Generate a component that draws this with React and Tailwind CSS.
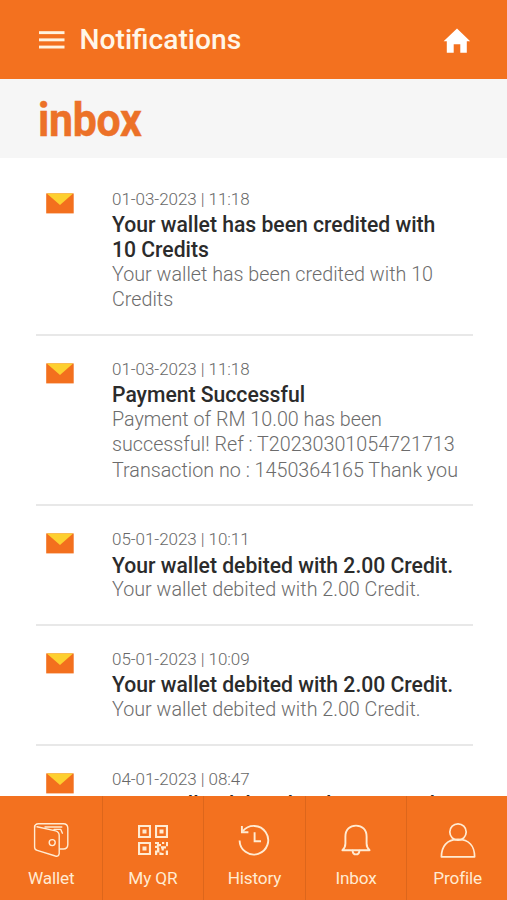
import React from "react";

/* ===== data ===== */
const MESSAGES = [
  {
    date: "01-03-2023 | 11:18",
    title: ["Your wallet has been credited with", "10 Credits"],
    body: ["Your wallet has been credited with 10", "Credits"],
  },
  {
    date: "01-03-2023 | 11:18",
    title: ["Payment Successful"],
    body: [
      "Payment of RM 10.00 has been",
      "successful! Ref : T20230301054721713",
      "Transaction no : 1450364165 Thank you",
    ],
  },
  {
    date: "05-01-2023 | 10:11",
    title: ["Your wallet debited with 2.00 Credit."],
    body: ["Your wallet debited with 2.00 Credit."],
  },
  {
    date: "05-01-2023 | 10:09",
    title: ["Your wallet debited with 2.00 Credit."],
    body: ["Your wallet debited with 2.00 Credit."],
  },
  {
    date: "04-01-2023 | 08:47",
    title: ["Your wallet debited with 2.00 Credit."],
    body: [],
  },
];

/* ===== icons ===== */
function MenuIcon() {
  return (
    <svg width="26" height="18" viewBox="0 0 26 18" fill="#fff3df" aria-hidden>
      <rect y="0.2" width="25.5" height="2.9" />
      <rect y="7.4" width="25.5" height="2.9" />
      <rect y="14.6" width="25.5" height="2.9" />
    </svg>
  );
}

function HomeIcon() {
  return (
    <svg width="28" height="25" viewBox="0 0 28 25" fill="#fff" aria-hidden>
      <path d="M14 0.5 27.2 13.2H23.8V24.8H17.3V16.2H10.7V24.8H3.8V13.2H0.6Z" />
    </svg>
  );
}

function MailIcon() {
  return (
    <svg width="28" height="21" viewBox="0 0 28 21" aria-hidden>
      <rect width="27.5" height="20" x="0.2" y="0.4" fill="#f3701e" />
      <path d="M0.8 0.4H27.1L14 12Z" fill="#fdd02f" />
    </svg>
  );
}

const LINE = {
  width: 36,
  height: 36,
  viewBox: "0 0 36 36",
  fill: "none",
  stroke: "#ffebd2",
  strokeWidth: 1.6,
  strokeLinejoin: "round",
  strokeLinecap: "round",
};

function WalletIcon() {
  return (
    <svg {...LINE} strokeWidth={1.4}>
      <path d="M1.6 4V25.2Q1.6 27.6 4.2 28.4L22.4 34Q25.6 34.9 26.2 31.6V13.6Q26.2 9.9 22.6 8.9L4 4.8" />
      <path d="M1.6 5.2Q1.8 2 5.4 1.8H30.4Q34.6 1.8 34.8 6V22.6Q34.6 27 30.4 27H26.8" />
      <path d="M12 5H28.8M21 7.4H27.8L29.4 11.2" />
      <circle cx="19.2" cy="20.6" r="3" />
    </svg>
  );
}

function QrIcon() {
  return (
    <svg {...LINE} stroke="none" fill="#ffebd2">
      <path
        fillRule="evenodd"
        d="M3 3H16V16H3ZM5.1 5.1V13.9H13.9V5.1ZM20 3H33V16H20ZM22.1 5.1V13.9H30.9V5.1ZM3 20H16V33H3ZM5.1 22.1V30.9H13.9V22.1Z"
      />
      <path d="M7.5 7.5H11.5V11.5H7.5ZM24.5 7.5H28.5V11.5H24.5ZM7.5 24.5H11.5V28.5H7.5Z" />
      <path d="M20 20H24V22H26V24.2H23.8V26H20V23.8H22V22H20ZM27 20H29.2V22H27ZM31 20H33V24.2H31V26.4H28.8V24.2H31ZM26 24.2H28.8V28.6H26.6V26.4H26ZM20 28.4H22V26H24.4V30.6H22.2V33H20ZM26.6 28.6V31H28.6V33H24.4V30.6H26.6ZM30.8 28.6H33V33H30.8Z" />
    </svg>
  );
}

function HistoryIcon() {
  return (
    <svg {...LINE} strokeLinecap="butt" strokeLinejoin="miter" strokeWidth={1.9}>
      <path d="M3.6 18.4A14.3 14.3 0 1 0 6.8 9.2" />
      <path d="M5.9 3.9V10.2H12.4" />
      <path d="M18.6 10.2V19.2H25" />
    </svg>
  );
}

function BellIcon() {
  return (
    <svg {...LINE} strokeWidth={1.9}>
      <path d="M4.4 28.2Q7.4 25.5 7.4 21.5V14.5C7.4 7.5 12 3.6 18 3.6S28.6 7.5 28.6 14.5V21.5Q28.6 25.5 31.6 28.2Z" />
      <path d="M14.6 28.6Q14.8 32.4 18 32.4T21.4 28.6" />
    </svg>
  );
}

function ProfileIcon() {
  return (
    <svg {...LINE} strokeWidth={1.7}>
      <circle cx="18" cy="10" r="8.2" />
      <path d="M1.4 34.8C1.4 24.8 6.5 17.4 18 17.4S34.6 24.8 34.6 34.8Z" />
    </svg>
  );
}

const TABS = [
  { label: "Wallet", Icon: WalletIcon },
  { label: "My QR", Icon: QrIcon },
  { label: "History", Icon: HistoryIcon },
  { label: "Inbox", Icon: BellIcon },
  { label: "Profile", Icon: ProfileIcon },
];

/* ===== list item ===== */
function Message({ m }) {
  return (
    <li className="flex h-fit border-b-2 border-[#e8e8e8] pt-[20.1px] pb-[21.3px] pl-[10px]">
      <div className="w-[66px] shrink-0 pt-[7px]">
        <MailIcon />
      </div>
      <div className="whitespace-nowrap leading-[25.3px]">
        <p className="mb-[-0.8px] text-[17px] leading-[27px] font-light tracking-[-0.05px] text-[#686868]">{m.date}</p>
        <h2 className="text-[21.15px] font-medium text-[#2b2b2b]">
          {m.title.map((t) => (
            <span key={t} className="block">{t}</span>
          ))}
        </h2>
        <p className="-mt-[0.5px] text-[19.73px] font-light text-[#6c6c6c]">
          {m.body.map((t) => (
            <span key={t} className="block">{t}</span>
          ))}
        </p>
      </div>
    </li>
  );
}

/* ===== screen ===== */
export default function App() {
  return (
    <div className="flex h-[900px] w-[507px] flex-col overflow-hidden bg-white font-['Roboto',sans-serif]">
      <header className="flex h-[79px] shrink-0 items-center bg-[#f3711f] pt-px pr-[36px] pl-[38.5px]">
        <MenuIcon />
        <h1 className="ml-[15px] grow text-[28.2px] leading-8 font-medium text-[#fff6e8]">Notifications</h1>
        <HomeIcon />
      </header>

      <div className="h-[79px] shrink-0 bg-[#f6f6f6] pt-[16.5px] pl-[38px]">
        <p className="origin-left scale-x-[0.92] text-[46.5px] leading-[48px] font-bold tracking-[-0.3px] text-[#ec7128] [-webkit-text-stroke:0.5px_#ec7128]">
          inbox
        </p>
      </div>

      <ul className="min-h-0 grow overflow-hidden pt-[7.7px] pr-[34px] pl-[36px]">
        {MESSAGES.map((m, i) => (
          <Message key={i} m={m} />
        ))}
      </ul>

      <nav className="h-[104px] shrink-0 overflow-hidden bg-[#f3711f]">
        <div className="-mr-[1px] grid h-full grid-cols-5">
          {TABS.map(({ label, Icon }) => (
            <div
              key={label}
              className="flex flex-col items-center border-l border-[#dd661b] pt-[26px] first:border-transparent"
            >
              <Icon />
              <span className="mt-[8px] text-[17.2px] leading-6 tracking-[-0.15px] text-[#ffebd2]">{label}</span>
            </div>
          ))}
        </div>
      </nav>
    </div>
  );
}
